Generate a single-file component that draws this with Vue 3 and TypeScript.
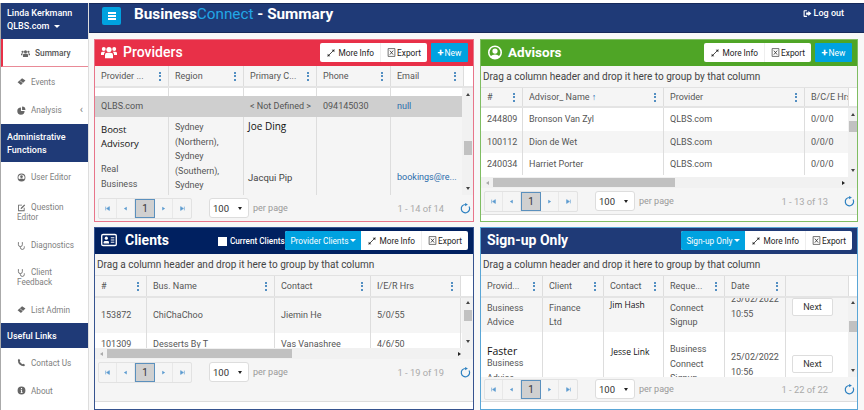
<script setup lang="ts">
interface Cell { lines: string[]; cls?: string }
interface Row { h: string; alt?: string; cells: Cell[] }
interface Panel {
  key: string; title: string; icon: string; group: boolean; dropdown?: string; check?: boolean; isNew: boolean;
  cols: string[]; rows: Row[]; total: string; hbar: boolean;
}
const c = (...lines: string[]): Cell => ({ lines })
const cc = (cls: string, ...lines: string[]): Cell => ({ cls, lines })

const panels: Panel[] = [
  { key: 'providers', title: 'Providers', icon: 'users', group: false, isNew: true, hbar: false, total: '1 - 14 of 14',
    cols: ['Provider ...', 'Region', 'Primary C...', 'Phone', 'Email'],
    rows: [
      { h: 'r8', cells: [c(''), c(''), cc('clip', 'Dalkrittyne'), c(''), c('')] },
      { h: 'r21', alt: 'sel', cells: [c('QLBS.com'), c(''), c('< Not Defined >'), c('094145030'), cc('link', 'null')] },
      { h: 'r78', alt: 'alt', cells: [
        cc('stack', 'Boost|', 'Advisory|', 'Real', 'Business'),
        cc('region', 'Sydney', '(Northern),', 'Sydney', '(Southern),', 'Sydney', '(Western),'),
        cc('names', 'Joe Ding', 'Jacqui Pip'),
        c(''),
        cc('link low', 'bookings@re...'),
      ] },
    ] },
  { key: 'advisors', title: 'Advisors', icon: 'user', group: true, isNew: true, hbar: true, total: '1 - 13 of 13',
    cols: ['#', 'Advisor_ Name ↑', 'Provider', 'B/C/E Hrs'],
    rows: [
      { h: 'r23', cells: [c('244809'), c('Bronson Van Zyl'), c('QLBS.com'), c('0/0/0')] },
      { h: 'r22', alt: 'alt', cells: [c('100112'), c('Dion de Wet'), c('QLBS.com'), c('0/0/0')] },
      { h: 'r22', cells: [c('240034'), c('Harriet Porter'), c('QLBS.com'), c('0/0/0')] },
    ] },
  { key: 'clients', title: 'Clients', icon: 'card', group: true, dropdown: 'Provider Clients', check: true, isNew: false, hbar: true, total: '1 - 19 of 19',
    cols: ['#', 'Bus. Name', 'Contact', 'I/E/R Hrs'],
    rows: [
      { h: 'r35', alt: 'alt', cells: [c('153872'), c('ChiChaChoo'), c('Jiemin He'), c('5/0/55')] },
      { h: 'r22', cells: [c('101309'), c('Desserts By T'), c('Vas Vanashree'), c('4/6/50')] },
    ] },
  { key: 'signup', title: 'Sign-up Only', icon: '', group: true, dropdown: 'Sign-up Only', isNew: false, hbar: false, total: '1 - 22 of 22',
    cols: ['Provid...', 'Client', 'Contact', 'Reque...', 'Date', ''],
    rows: [
      { h: 'r34', alt: 'alt', cells: [
        c('Business', 'Advice'), c('Finance', 'Ltd'), cc('jim', 'Jim Hash'),
        c('Connect', 'Signup'), cc('dateA', '25/02/2022', '10:55'), cc('btn', 'Next'),
      ] },
      { h: 'r60', cells: [
        cc('faster', 'Faster|', 'Business', 'Advice'), c(''), cc('jesse', 'Jesse Link'),
        cc('biz', 'Business', 'Connect', 'Signup'), cc('dateB', '25/02/2022', '10:56'), cc('btn b2', 'Next'),
      ] },
    ] },
]

const nav = [
  { t: 'item', cls: 'active', icon: 'users', label: ['Summary'] },
  { t: 'item', cls: '', icon: 'ticket', label: ['Events'] },
  { t: 'item', cls: 'chev', icon: 'pie', label: ['Analysis'] },
  { t: 'head', cls: 'h38', label: ['Administrative', 'Functions'] },
  { t: 'item', cls: 'ue', icon: 'usercog', label: ['User Editor'] },
  { t: 'item', cls: 'two qe', icon: 'edit', label: ['Question', 'Editor'] },
  { t: 'item', cls: 'diag', icon: 'steth', label: ['Diagnostics'] },
  { t: 'item', cls: 'two', icon: 'steth', label: ['Client', 'Feedback'] },
  { t: 'item', cls: '', icon: 'ticket', label: ['List Admin'] },
  { t: 'head', cls: 'h25', label: ['Useful Links'] },
  { t: 'item', cls: '', icon: 'phone', label: ['Contact Us'] },
  { t: 'item', cls: '', icon: 'info', label: ['About'] },
]
</script>

<template>
  <div class="page">
    <aside class="side">
      <div class="user"><div>Linda Kerkmann</div><div>QLBS.com <span class="caret"></span></div></div>
      <template v-for="n in nav" :key="n.label[0]">
        <div v-if="n.t === 'head'" class="navhead" :class="n.cls"><div v-for="l in n.label" :key="l">{{ l }}</div></div>
        <div v-else class="navitem" :class="n.cls">
          <div class="navline">
            <svg class="nicon" viewBox="0 0 16 16">
              <g v-if="n.icon === 'users'"><circle cx="8" cy="5" r="2.8"/><circle cx="2.8" cy="5" r="2"/><circle cx="13.2" cy="5" r="2"/><path d="M3.5 14V10.5Q3.5 8.5 6 8.5H10Q12.500 8.500 12.500 10.500V14Z"/><path d="M0 11V9Q0 7.500 2 7.500H3.200Q2.500 8.500 2.500 10V11ZM16 11V9Q16 7.500 14 7.500H12.800Q13.500 8.500 13.500 10V11Z"/></g>
              <g v-else-if="n.icon === 'ticket'"><path d="M1 9.500L9 2 15 6 7 14Z"/><path d="M5 6.500L10.500 10.500" stroke="#fff" stroke-width="1"/></g>
              <g v-else-if="n.icon === 'pie'"><path d="M7 2.500A6.500 6.500 0 1 0 13.500 9H7Z"/><path d="M9 1A6 6 0 0 1 15 7H9Z"/></g>
              <g v-else-if="n.icon === 'usercog'"><path d="M8 1A7 7 0 1 0 8 15 7 7 0 0 0 8 1ZM8 2.500A5.500 5.500 0 0 1 12.500 11.200Q11 9.800 8 9.800T3.500 11.200A5.500 5.500 0 0 1 8 2.500Z" fill-rule="evenodd"/><circle cx="8" cy="6.500" r="2.300"/></g>
              <g v-else-if="n.icon === 'edit'"><path d="M2 3H9V4.500H3.500V13H12V8.500H13.500V14.500H2Z"/><path d="M7 8.500L13 2.500 14.500 4 8.500 10 6.500 10.500Z"/></g>
              <path v-else-if="n.icon === 'steth'" d="M2.500 2V6.500A3.500 3.500 0 0 0 9.500 6.500V2M6 10V11.500A3.500 3.500 0 0 0 13 11.500V9.500" fill="none" stroke="#666" stroke-width="1.500"/>
              <path v-else-if="n.icon === 'phone'" d="M3.500 1.500L6 4.500 4.800 6.300Q6.500 9.500 9.700 11.200L11.500 10 14.500 12.500 12.500 14.500Q7.500 14.500 4.500 11.500T1.500 3.500Z"/>
              <path v-else-if="n.icon === 'info'" d="M8 1A7 7 0 1 0 8 15 7 7 0 0 0 8 1ZM7 3.500H9V5.500H7ZM6.500 6.800H9V11H10V12.500H6.500V11H7.300V8.200H6.500Z" fill-rule="evenodd"/>
            </svg>
            <span>{{ n.label[0] }}</span>
            <span v-if="n.cls === 'chev'" class="chevron">‹</span>
          </div>
          <div v-if="n.label[1]" class="navsub">{{ n.label[1] }}</div>
        </div>
      </template>
    </aside>

    <div class="right">
      <header class="topbar">
        <button class="burger"><i></i><i></i><i></i></button>
        <h1>Business<span>Connect</span> - Summary</h1>
        <div class="logout">
          <svg viewBox="0 0 16 16" class="lo"><path d="M7 2H2.500Q1 2 1 3.500V12.500Q1 14 2.500 14H7V12H3V4H7Z"/><path d="M9.500 3.500L15 8 9.500 12.500V10H5.500V6H9.500Z"/></svg>
          Log out
        </div>
      </header>

      <main class="grid">
        <section v-for="p in panels" :key="p.key" class="panel" :class="p.key">
          <div class="title">
            <svg v-if="p.icon === 'users'" class="ticon" viewBox="0 0 22 18" fill="#fff">
              <circle cx="11" cy="5" r="3.600"/><circle cx="3.800" cy="4.300" r="2.700"/><circle cx="18.200" cy="4.300" r="2.700"/>
              <path d="M5.500 17V12.500Q5.500 9.500 8.500 9.500H13.500Q16.500 9.500 16.500 12.500V17Z"/>
              <path d="M0 12.500V10Q0 8 2.500 8H6Q4 9.500 4 12.500ZM22 12.500V10Q22 8 19.500 8H16Q18 9.500 18 12.500Z"/>
            </svg>
            <svg v-else-if="p.icon === 'user'" class="ticon" viewBox="0 0 16 16" fill="#fff">
              <path fill-rule="evenodd" d="M8 .5A7.500 7.500 0 1 0 8 15.500 7.500 7.500 0 0 0 8 .5ZM8 2.200A5.800 5.800 0 0 1 12.300 11.800Q11 10 8 10T3.700 11.800A5.800 5.800 0 0 1 8 2.200Z"/>
              <circle cx="8" cy="6.500" r="2.800"/>
            </svg>
            <svg v-else-if="p.icon === 'card'" class="ticon cardi" viewBox="0 0 18 14">
              <rect x=".8" y=".8" width="16.400" height="12.400" rx="1.500" fill="none" stroke="#fff" stroke-width="1.500"/>
              <circle cx="6" cy="5" r="1.800" fill="#fff"/><path d="M3 11V9.500Q3 8 4.500 8H7.500Q9 8 9 9.500V11Z" fill="#fff"/>
              <path d="M11 4.500H15M11 7H15M11 9.500H15" stroke="#fff" stroke-width="1.100"/>
            </svg>
            <h2>{{ p.title }}</h2>
            <label v-if="p.check" class="check"><i></i>Current Clients</label>
            <div class="actions">
              <div class="btngroup">
                <span v-if="p.dropdown" class="drop">{{ p.dropdown }}<b class="caret"></b></span>
                <span class="act first">
                  <svg viewBox="0 0 12 12" class="mi"><path d="M1 11L11 1" stroke="#222" stroke-width="1.200"/><path d="M7 1H11V5ZM1 7V11H5Z" fill="#222"/></svg>
                  More Info
                </span>
                <span class="act">
                  <svg viewBox="0 0 12 12" class="xl"><path d="M1.500 .8H10.500V11.200H1.500Z" fill="none" stroke="#444"/><path d="M3.800 3.500L8.200 8.800M8.200 3.500L3.800 8.800" stroke="#333" stroke-width="1.100"/></svg>
                  Export
                </span>
              </div>
              <span v-if="p.isNew" class="newbtn"><b>+</b>New</span>
            </div>
          </div>
          <div class="content">
            <div v-if="p.group" class="grouphint">Drag a column header and drop it here to group by that column</div>
            <div class="tablearea">
              <div class="headrow">
                <div v-for="(h, i) in p.cols" :key="i" class="hcell">
                  <span class="htext"><template v-if="h.endsWith('↑')">{{ h.slice(0, -1) }}<em>↑</em></template><template v-else>{{ h }}</template></span>
                  <span v-if="h && !(p.key === 'advisors' && i === 3)" class="dots"><i></i><i></i><i></i></span>
                </div>
                <div class="hfill"></div>
              </div>
              <div class="bodywrap">
                <div class="rows">
                  <div v-for="(r, ri) in p.rows" :key="ri" class="row" :class="[r.h, r.alt]">
                    <div v-for="(cell, ci) in r.cells" :key="ci" class="cell" :class="cell.cls">
                      <template v-if="cell.cls && cell.cls.startsWith('btn')"><span class="next">{{ cell.lines[0] }}</span></template>
                      <template v-else>
                        <div v-for="(l, li) in cell.lines" :key="li" class="ln" :class="{ pasted: l.includes('|') }">{{ l.replace('|', '') }}</div>
                      </template>
                    </div>
                  </div>
                </div>
                <div class="vbar"><s class="up"></s><u></u><s class="dn"></s></div>
              </div>
              <div v-if="p.hbar" class="hbar"><s class="lf"></s><u></u><s class="rt"></s></div>
            </div>
            <div class="pager">
              <div class="pbtns">
                <span class="pb"><svg viewBox="0 0 8 8"><path d="M1 1V7M7 1V7L2.500 4Z" stroke="#5b9bd0" fill="#5b9bd0"/></svg></span>
                <span class="pb"><svg viewBox="0 0 8 8"><path d="M6 1V7L1.500 4Z" fill="#5b9bd0"/></svg></span>
                <span class="pb cur">1</span>
                <span class="pb"><svg viewBox="0 0 8 8"><path d="M2 1V7L6.500 4Z" fill="#5b9bd0"/></svg></span>
                <span class="pb"><svg viewBox="0 0 8 8"><path d="M7 1V7M1 1V7L5.500 4Z" stroke="#5b9bd0" fill="#5b9bd0"/></svg></span>
              </div>
              <span class="psel">100<b></b></span>
              <span class="pp">per page</span>
              <span class="ptotal">{{ p.total }}</span>
              <svg class="refresh" viewBox="0 0 14 14"><path d="M11.500 4.500A5.300 5.300 0 1 1 7 1.900" fill="none" stroke="#2a7fc0" stroke-width="1.500"/><path d="M6.500 0V4L10 2Z" fill="#2a7fc0"/></svg>
            </div>
            <div class="tail"></div>
          </div>
        </section>
      </main>
    </div>
  </div>
</template>

<style>
html, body { margin: 0; padding: 0; background: #fff; overflow: hidden; }
</style>

<style scoped>
.page { width: 864px; height: 410px; display: flex; padding-top: 3px; box-sizing: border-box; font-family: Roboto, "Liberation Sans", sans-serif; font-size: 10px; color: #555; overflow: hidden; }
.side { width: 89px; flex: none; border-left: 1px solid #aaa; box-sizing: border-box; border-right: 1px solid #ddd; background: #fff; display: flex; flex-direction: column; }
.user { height: 36px; background: #1f3a77; color: #fff; font-weight: 500; font-size: 9px; padding: 4px 0 0 6px; line-height: 13px; box-sizing: border-box; }
.caret { display: inline-block; width: 0; height: 0; border: 3px solid transparent; border-top-color: currentColor; border-bottom: 0; vertical-align: middle; margin-left: 2px; }
.navhead { background: #1f3a77; color: #fff; font-weight: 500; font-size: 9px; padding: 1px 0 0 6px; box-sizing: border-box; display: flex; flex-direction: column; justify-content: center; line-height: 13px; }
.h38 { height: 38px; }
.h25 { height: 25px; }
.navitem { height: 28px; display: flex; flex-direction: column; justify-content: center; padding: 1px 0 0 16px; font-size: 8.200px; color: #808080; box-sizing: border-box; }
.navitem.two { height: 37px; line-height: 10px; }
.navitem.qe { height: 40px; padding-top: 2px; }
.navitem.ue { height: 29px; }
.navitem.diag { height: 27px; }
.navitem.active { border-left: 2px solid #e83048; border-bottom: 1px solid #e98a97; padding-left: 18px; color: #555; font-weight: 500; font-size: 8.300px; }
.navitem.chev { height: 29px; }
.navline { display: flex; align-items: center; gap: 5px; white-space: nowrap; }
.nicon { width: 9px; height: 9px; fill: #666; flex: none; }
.chevron { margin-left: 13px; font-size: 11px; line-height: 8px; }

.right { flex: 1; min-width: 0; display: flex; flex-direction: column; background: #f8f8f8; }
.topbar { height: 30px; flex: none; background: #1f3a77; border-top: 1px solid #16295a; border-bottom: 1px solid #16295a; box-sizing: border-box; display: flex; align-items: flex-start; padding: 3px 20px 0 13px; color: #fff; }
.burger { width: 19px; height: 18px; background: #00a2e0; border: 0; border-radius: 2px; padding: 0; display: flex; flex-direction: column; align-items: center; justify-content: center; gap: 1.500px; margin-right: 13px; }
.burger i { width: 8px; height: 1.500px; background: #fff; display: block; }
h1 { margin: -3px 0 0; font-size: 15.300px; font-weight: 700; color: #fff; line-height: 20px; }
h1 span { color: #22a7e6; font-weight: 400; }
.logout { margin-left: auto; margin-top: -1px; font-size: 9px; font-weight: 500; display: flex; align-items: center; gap: 2px; height: 14px; }
.lo { width: 9px; height: 9px; fill: #fff; }

.grid { flex: 1; min-height: 0; display: grid; grid-template-columns: 380px 378px; grid-template-rows: 183px 183px; column-gap: 6px; row-gap: 5px; padding: 6px 0 0 5px; }
.panel { border: 1px solid; box-sizing: border-box; display: flex; flex-direction: column; min-width: 0; overflow: hidden; background: #fff; }
.providers { border-color: #e8758a; }
.advisors { border-color: #7fbd62; }
.clients { border-color: #36538f; }
.signup { border-color: #5aa6d6; }
.title { height: 26px; flex: none; display: flex; align-items: center; color: #fff; padding: 0 5px 0 6px; box-sizing: border-box; white-space: nowrap; }
.providers .title { background: #e83048; }
.advisors .title { background: #4fa526; }
.clients .title { background: #002060; }
.signup .title { background: #1f3a77; }
h2 { margin: -2px 0 0 6px; font-size: 14px; font-weight: 500; line-height: 20px; color: #fff; }
.advisors h2, .clients h2, .signup h2 { font-weight: 700; }
.advisors h2 { font-size: 13.500px; margin-left: 5px; }
.clients h2 { margin-left: 8px; }
.signup h2 { margin-left: 0; }
.ticon { width: 16px; height: 15px; margin-top: -2px; }
.cardi { height: 14px; }
.check { margin-left: 49px; display: flex; align-items: center; gap: 3px; font-size: 8.200px; font-weight: 500; }
.check i { width: 9px; height: 9px; background: #fff; display: block; }
.actions { margin-left: auto; display: flex; align-items: center; gap: 4px; margin-top: -1px; }
.btngroup { display: flex; background: #fff; border-radius: 2px; height: 19px; align-items: stretch; color: #222; font-size: 8.300px; }
.drop { background: #00a2e0; color: #fff; display: flex; align-items: center; padding: 0 5px; border-radius: 2px 0 0 2px; }
.drop .caret { margin-left: 2px; }
.act { display: flex; align-items: center; gap: 3px; padding: 0 6px; }
.act.first { border-right: 1px solid #eee; padding-left: 7px; }
.mi { width: 8px; height: 8px; }
.xl { width: 9px; height: 9px; margin-right: -2px; }
.newbtn { background: #00a2e0; color: #fff; height: 19px; width: 37px; box-sizing: border-box; display: flex; align-items: center; justify-content: center; font-size: 8.500px; border-radius: 1px; gap: 1px; }
.newbtn b { font-size: 11px; line-height: 10px; }

.content { flex: 1; min-height: 0; display: flex; flex-direction: column; background: #f5f5f5; }
.grouphint { height: 22px; flex: none; display: flex; align-items: center; padding-left: 2px; font-size: 10px; color: #444; border-bottom: 1px solid #e2e2e2; box-sizing: border-box; white-space: nowrap; }
.tablearea { display: flex; flex-direction: column; flex: none; overflow: hidden; background: #fff; }
.headrow, .row { display: grid; }
.headrow { height: 20px; background: #f5f5f5; border-bottom: 2px solid #e4e4e4; box-sizing: content-box; }
.advisors .headrow { height: 18px; }
.providers .headrow { grid-template-columns: 74px 75px 73px 74px 73px 1fr; }
.providers .row { grid-template-columns: 74px 75px 73px 74px 73px; }
.advisors .headrow { grid-template-columns: 42px 141px 141px 44px 1fr; }
.advisors .row { grid-template-columns: 42px 141px 141px 44px; }
.clients .headrow { grid-template-columns: 52px 128px 96px 90px 1fr; }
.clients .row { grid-template-columns: 52px 128px 96px 90px; }
.signup .headrow { grid-template-columns: 62px 61px 60px 61px 61px 63px 1fr; }
.signup .row { grid-template-columns: 62px 61px 60px 61px 61px 63px; }
.hcell { display: flex; align-items: center; padding: 0 4px 0 6px; border-right: 1px solid #ddd; font-size: 9px; color: #555; min-width: 0; white-space: nowrap; }
.advisors .hcell:nth-child(4) { padding-right: 0; }
.htext { flex: 1; overflow: hidden; }
.htext em { color: #1c6cb0; font-style: normal; font-weight: 700; }
.hfill { background: #fff; }
.dots { display: flex; flex-direction: column; gap: 1.500px; width: 2px; flex: none; margin-right: 3px; }
.dots i { width: 2px; height: 2px; border-radius: 50%; background: #1c6cb0; display: block; }
.bodywrap { display: flex; overflow: hidden; }
.rows { flex: 1; min-width: 0; overflow: hidden; }
.providers .bodywrap { height: 107px; }
.advisors .bodywrap { height: 69px; }
.clients .bodywrap { height: 50px; }
.signup .bodywrap { height: 79px; }
.row { background: #fff; overflow: hidden; }
.alt { background: #f5f5f5; }
.sel { background: #cfcfcf; }
.sel .cell { border-right-color: #cfcfcf; }
.r8 { height: 8px; }
.r21 { height: 21px; }
.r78 { height: 78px; }
.r23 { height: 23px; }
.r22 { height: 22px; }
.r35 { height: 35px; }
.r34 { height: 34px; }
.r60 { height: 60px; }
.cell { padding: 0 6px; border-right: 1px solid #ddd; display: flex; flex-direction: column; justify-content: center; font-size: 9px; line-height: 14.500px; color: #555; overflow: hidden; min-width: 0; white-space: nowrap; }
.r78 .cell { justify-content: flex-start; padding-top: 2px; }
.r78 .region { padding-top: 3px; }
.r60 .cell { justify-content: flex-start; }
.clip { justify-content: flex-start; margin-top: -12px; }
.link { color: #2a6cab; }
.r78 .low { padding-top: 53px; }
.names { color: #444; padding-left: 4px; }
.names .ln:first-child { font-family: "Open Sans", sans-serif; font-size: 10px; color: #111; }
.names .ln:last-child { margin-top: 37px; font-size: 9.500px; }
.r78 .stack { padding-top: 6px; }
.stack .ln:nth-child(3) { margin-top: 11px; }
.pasted { font-family: "Open Sans", sans-serif; font-size: 9.500px; color: #111; line-height: 14px; }
.jim { justify-content: flex-start; color: #111; font-family: "Open Sans", sans-serif; font-size: 8.500px; }
.r60 .jesse { padding-top: 13px; padding-left: 7px; color: #111; font-family: "Open Sans", sans-serif; font-size: 8.500px; }
.r60 .faster { padding-top: 14px; }
.faster .pasted { line-height: 10px; font-size: 10.500px; }
.r60 .biz { padding-top: 10px; }
.dateA { justify-content: flex-start; margin-top: -6px; }
.r60 .dateB { padding-top: 18px; }
.cell.btn { padding: 0 0 0 6px; justify-content: flex-start; }
.next { border: 1px solid #ddd; background: #fff; border-radius: 2px; width: 41px; height: 18px; display: flex; align-items: center; justify-content: center; color: #333; box-sizing: border-box; }
.b2 .next { margin-top: 23px; }
.vbar { width: 11px; flex: none; background: #f1f1f1; display: flex; flex-direction: column; align-items: center; padding: 3px 0 5px; box-sizing: border-box; }
.vbar u { width: 8px; height: 11px; background: #c1c1c1; display: block; }
.dn { margin-top: auto; }
.providers .vbar { padding-top: 5px; }
.providers .vbar u { height: 14px; margin-top: 45px; }
.advisors .vbar { width: 9px; padding-top: 5px; }
.advisors .vbar u { margin-top: 5px; }
.clients .vbar u { margin-top: 6px; }
.signup .vbar { width: 9px; }
.signup .vbar u { margin-top: 17px; }
.up, .dn { width: 0; height: 0; border: 2px solid transparent; display: block; }
.up { border-bottom: 3px solid #444; border-top: 0; }
.dn { border-top: 3px solid #444; border-bottom: 0; }
.hbar { height: 11px; background: #f1f1f1; display: flex; align-items: center; padding: 0 2px 0 5px; flex: none; }
.hbar u { height: 9px; background: #c1c1c1; display: block; margin-left: 4px; }
.advisors .hbar u { width: 182px; }
.clients .hbar u { width: 185px; }
.hbar .rt { margin-left: auto; margin-right: 10px; }
.lf, .rt { width: 0; height: 0; border: 2px solid transparent; display: block; }
.lf { border-right: 3px solid #aaa; border-left: 0; }
.rt { border-left: 3px solid #222; border-right: 0; }
.pager { flex: none; height: 26px; display: flex; align-items: center; padding: 0 2px 0 3px; background: #f5f5f5; }
.signup .pager { height: 24px; }
.pbtns { display: flex; height: 19px; border: 1px solid #e2e2e2; border-radius: 2px; background: #f5f5f5; }
.pb { width: 18px; display: flex; align-items: center; justify-content: center; border-right: 1px solid #e8e8e8; font-size: 10px; color: #333; box-sizing: border-box; }
.pb:last-child { border-right: 0; }
.pb svg { width: 5px; height: 5px; }
.cur { background: #d0d0d0; border: 1px solid #5b90bd; width: 20px; }
.psel { margin-left: 17px; width: 40px; height: 20px; border: 1px solid #ddd; border-radius: 3px; box-sizing: border-box; display: flex; align-items: center; padding-left: 3px; background: #fff; color: #333; font-size: 9.500px; }
.psel b { margin-left: 9px; width: 0; height: 0; border: 2.500px solid transparent; border-top: 3px solid #222; border-bottom: 0; }
.pp { margin-left: 4px; color: #999; font-size: 9px; }
.ptotal { margin-left: auto; color: #aaa; font-size: 9.300px; margin-right: 16px; }
.refresh { width: 11px; height: 11px; }
.tail { flex: 1; background: #fff; min-height: 0; }
.advisors .tail, .signup .tail { background: linear-gradient(#ddd 0 1px, #fff 1px); }
.clients .tail { background: linear-gradient(#f5f5f5 0 16px, #ddd 16px 17px, #fff 17px); }
</style>
